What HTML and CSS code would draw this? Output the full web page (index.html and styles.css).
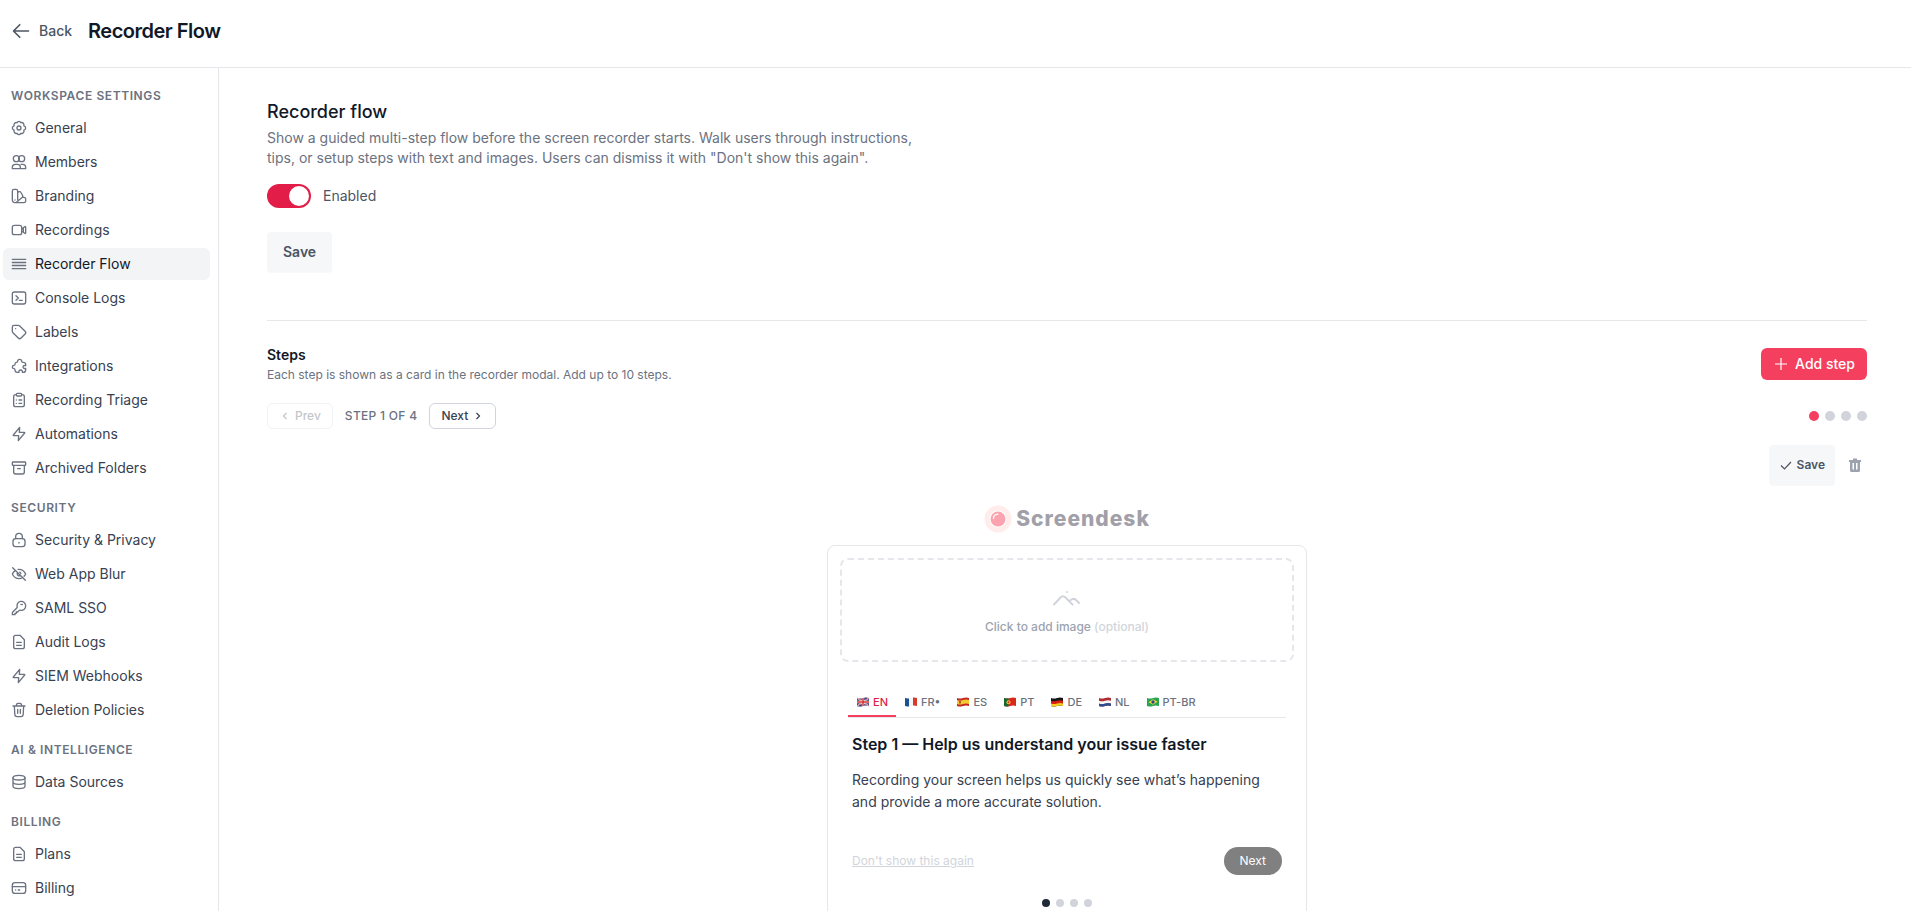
FILE: index.html
```
<!DOCTYPE html>
<html lang="en">

<head>
    <meta charset="UTF-8">
    <meta name="viewport" content="width=device-width, initial-scale=1.0">
    <title>Recorder Flow</title>
    <link rel="stylesheet" href="styles.css">
</head>

<body>

    <header class="topbar">
        <a href="#" class="back">
            <svg viewBox="0 0 24 24"><path d="M10.5 19.5 3 12l7.5-7.5M3 12h18"/></svg>
            Back
        </a>
        <h1>Recorder Flow</h1>
    </header>

    <div class="layout">
        <nav class="sidebar">
            <h2>Workspace Settings</h2>
            <ul>
                <li><a href="#"><svg viewBox="0 0 24 24"><circle cx="12" cy="12" r="3"/><path d="M12 2q2 0 2.500 2 2.500-.8 4 .8t.8 3.900q2.700.8 2.700 3.300t-2.700 3.300q.8 2.300-.8 3.900t-4 .8q-.5 2-2.500 2t-2.500-2q-2.500.8-4-.8t-.8-3.900Q2 14.500 2 12t2.700-3.300q-.8-2.300.8-3.900t4-.8Q10 2 12 2z"/></svg>General</a></li>
                <li><a href="#"><svg viewBox="0 0 24 24"><circle cx="8" cy="7" r="4.500"/><circle cx="16" cy="7" r="4.500"/><path d="M2 22v-2a4.500 4.500 0 0 1 4.500-4.500h3A4.500 4.500 0 0 1 14 20v2zM15 15.500h2.500A4.500 4.500 0 0 1 22 20v2h-8"/></svg>Members</a></li>
                <li><a href="#"><svg viewBox="0 0 24 24"><path d="M10 17.500V4.500A2.500 2.500 0 0 0 7.500 2h-3A2.500 2.500 0 0 0 2 4.500v13A4 4 0 0 0 6 22h13.500a2.500 2.500 0 0 0 2.500-2.500v-3a2.500 2.500 0 0 0-2.500-2.500H18M10 6.500l1.500-.8a2.500 2.500 0 0 1 3.400 1l2.400 4.200a2.500 2.500 0 0 1-.6 3.200L8.500 21M6 18h.01"/></svg>Branding</a></li>
                <li><a href="#"><svg viewBox="0 0 24 24"><rect x="2" y="5" width="14" height="14" rx="3"/><path d="M16 10.500 20.500 7c.8-.6 1.500-.2 1.500.8v8.400c0 1-.7 1.400-1.500.8L16 13.500M18.500 9v6"/></svg>Recordings</a></li>
                <li><a href="#" class="active"><svg viewBox="0 0 24 24"><path d="M2 5h20M2 9.700h20M2 14.300h20M2 19h20"/></svg>Recorder Flow</a></li>
                <li><a href="#"><svg viewBox="0 0 24 24"><rect x="2" y="3" width="20" height="18" rx="3"/><path d="M7.500 8.500 11 12l-3.500 3.500M12.500 15.500H17"/></svg>Console Logs</a></li>
                <li><a href="#"><svg viewBox="0 0 24 24"><path d="M2 11V4.500A2.500 2.500 0 0 1 4.500 2H11a3 3 0 0 1 2.100.9l8 8a3 3 0 0 1 0 4.200l-6 6a3 3 0 0 1-4.200 0l-8-8A3 3 0 0 1 2 11zM7 7h.01"/></svg>Labels</a></li>
                <li><a href="#"><svg viewBox="0 0 24 24"><path d="M10 5a3 3 0 0 1 6 0c0 1.500.3 1.500 2 1.500 2.500 0 4 .5 4 3v2c-2-.8-4 .3-4 2s2 2.800 4 2v2c0 2.500-1 4-3.500 4H17c.5-2-.5-3.500-2.500-3.500s-3 1.500-2.500 3.500H9.500C7 21.500 6 20.500 6 18c0-1.600 0-2-1.500-2a2.500 2.500 0 0 1 0-5C6 11 6 10.500 6 9.500 6 7.500 7 6.500 8 6.500c1.500 0 2 0 2-1.500z"/></svg>Integrations</a></li>
                <li><a href="#"><svg viewBox="0 0 24 24"><path d="M16 4h1a3 3 0 0 1 3 3v12a3 3 0 0 1-3 3H7a3 3 0 0 1-3-3V7a3 3 0 0 1 3-3h1M8 3.500C8 2.700 8.700 2 9.500 2h5c.8 0 1.500.7 1.500 1.500v1c0 .8-.7 1.500-1.500 1.500h-5C8.700 6 8 5.300 8 4.500zM8 12h.01M8 17h.01M12 12h4M12 17h4"/></svg>Recording Triage</a></li>
                <li><a href="#"><svg viewBox="0 0 24 24"><path d="M13 2 3.500 13.500c-.4.500-.2.900.5.900h7.500L11 22l9.500-11.500c.4-.5.200-.9-.5-.9h-7.500z"/></svg>Automations</a></li>
                <li><a href="#"><svg viewBox="0 0 24 24"><rect x="2" y="3" width="20" height="5" rx="1"/><path d="M4 8v10a3 3 0 0 0 3 3h10a3 3 0 0 0 3-3V8M10 13h4"/></svg>Archived Folders</a></li>
            </ul>

            <h2>Security</h2>
            <ul>
                <li><a href="#"><svg viewBox="0 0 24 24"><rect x="3" y="10" width="18" height="12" rx="4"/><path d="M7 10V7a5 5 0 0 1 10 0v3M12 15.500v1"/></svg>Security &amp; Privacy</a></li>
                <li><a href="#"><svg viewBox="0 0 24 24"><path d="M10.700 5.100C17 4.500 20.800 9.500 22 12c-.5 1-1.300 2.200-2.400 3.400M6.500 6.500C4.200 8 2.800 10.300 2 12c1.200 2.500 4.600 7 10 7 2.200 0 4-.7 5.500-1.700M9.900 9.900a3 3 0 0 0 4.200 4.200M13 9.200a3 3 0 0 1 1.900 2M2.500 2.500l19 19"/></svg>Web App Blur</a></li>
                <li><a href="#"><svg viewBox="0 0 24 24"><path d="M17 7a3 3 0 0 0-2-.5M22 8.500A6.500 6.500 0 1 0 9.300 10.500c.1.500 0 .8-.3 1.100L2.700 18c-.5.500-.7.900-.7 1.600V22h4v-2h2v-2h2l2.400-2.400c.3-.3.700-.4 1.100-.3A6.500 6.500 0 0 0 22 8.500z"/></svg>SAML SSO</a></li>
                <li><a href="#"><svg viewBox="0 0 24 24"><path d="M13.500 2H7a3 3 0 0 0-3 3v14a3 3 0 0 0 3 3h10a3 3 0 0 0 3-3V8.500zM8.500 12.500h7M8.500 17h7"/></svg>Audit Logs</a></li>
                <li><a href="#"><svg viewBox="0 0 24 24"><path d="M13 2 3.500 13.500c-.4.500-.2.900.5.900h7.500L11 22l9.500-11.500c.4-.5.200-.9-.5-.9h-7.500z"/></svg>SIEM Webhooks</a></li>
                <li><a href="#"><svg viewBox="0 0 24 24"><path d="M3 6h18M8 6c0-2.500.8-4 2.500-4h3C15.200 2 16 3.500 16 6M5 6l.7 12.500c.1 2.300 1 3.500 3.300 3.500h6c2.300 0 3.200-1.200 3.300-3.500L19 6M10 11v6M14 11v6"/></svg>Deletion Policies</a></li>
            </ul>

            <h2>AI &amp; Intelligence</h2>
            <ul>
                <li><a href="#"><svg viewBox="0 0 24 24"><ellipse cx="12" cy="5.500" rx="9" ry="3.500"/><path d="M3 5.500v13C3 20.400 7 22 12 22s9-1.600 9-3.500v-13M3 12c0 1.900 4 3.500 9 3.500s9-1.600 9-3.500"/></svg>Data Sources</a></li>
            </ul>

            <h2>Billing</h2>
            <ul>
                <li><a href="#"><svg viewBox="0 0 24 24"><path d="M13.500 2H7a3 3 0 0 0-3 3v14a3 3 0 0 0 3 3h10a3 3 0 0 0 3-3V8.500zM8.500 12.500h7M8.500 17h7"/></svg>Plans</a></li>
                <li><a href="#"><svg viewBox="0 0 24 24"><rect x="2" y="4" width="20" height="16" rx="4"/><path d="M2 10h20M7 15h.01M11 15h2"/></svg>Billing</a></li>
            </ul>
        </nav>

        <main class="content">
            <section class="settings">
                <h2>Recorder flow</h2>
                <p>Show a guided multi-step flow before the screen recorder starts. Walk users through instructions, tips, or setup steps with text and images. Users can dismiss it with "Don't show this again".</p>
                <label class="toggle">
                    <input type="checkbox" checked>
                    Enabled
                </label>
                <button type="button" class="btn-save">Save</button>
            </section>

            <section class="steps">
                <div class="row">
                    <div>
                        <h3>Steps</h3>
                        <p>Each step is shown as a card in the recorder modal. Add up to 10 steps.</p>
                    </div>
                    <button type="button" class="btn-add">
                        <svg viewBox="0 0 16 16"><path d="M8 2v12M2 8h12"/></svg>
                        Add step
                    </button>
                </div>

                <div class="row pager">
                    <div class="pager-controls">
                        <button type="button" disabled><svg viewBox="0 0 12 12"><path d="M7.500 3 4.500 6l3 3"/></svg>Prev</button>
                        <span>STEP 1 OF 4</span>
                        <button type="button">Next<svg viewBox="0 0 12 12"><path d="m4.500 3 3 3-3 3"/></svg></button>
                    </div>
                    <div class="dots">
                        <span class="current"></span><span></span><span></span><span></span>
                    </div>
                </div>

                <div class="step-actions">
                    <button type="button" class="btn-save small">
                        <svg viewBox="0 0 14 14"><path d="M2 7.500 5.500 11 12 4"/></svg>
                        Save
                    </button>
                    <button type="button" class="btn-trash" aria-label="Delete step">
                        <svg viewBox="0 0 16 16"><path fill-rule="evenodd" d="M6 1.500h4V3h4v2h-1v8.500a1.500 1.500 0 0 1-1.500 1.500h-7A1.500 1.500 0 0 1 3 13.500V5H2V3h4zM5.500 6v6.500H7V6zM9 6v6.500h1.500V6z"/></svg>
                    </button>
                </div>

                <div class="logo">
                    <svg viewBox="0 0 28 28"><circle cx="14" cy="14" r="11" fill="none" stroke="#ffeceb" stroke-width="5"/><circle cx="14" cy="14" r="7.500" fill="#fba4af"/><path d="M9.500 13.500c0-2.500 1.800-4.200 4.500-4.400" fill="none" stroke="#fff" stroke-width="1.200" stroke-linecap="round"/></svg>
                    Screendesk
                </div>

                <div class="card">
                    <button type="button" class="upload">
                        <svg viewBox="0 0 32 24"><path d="M3 19.500 9.500 12.500q2.500-2.500 5 0L21.500 19.500M18.500 16l2-1.500q2.500-1.500 4.500.5l3 3"/><circle cx="16" cy="7" r="1"/></svg>
                        <span>Click to add image <em>(optional)</em></span>
                    </button>

                    <div class="card-body">
                        <div class="tabs" role="tablist">
                            <button type="button" role="tab" class="selected"><svg viewBox="0 0 14 10"><path fill="#29337a" d="M1 1q3 1 6 0t6 0v8q-3-1-6 0t-6 0z"/><path stroke="#fff" stroke-width="1.500" d="m1 1 12 8M13 1 1 9"/><path stroke="#d03433" stroke-width=".7" d="m1 1 12 8M13 1 1 9"/><path stroke="#fff" stroke-width="2.500" d="M7 1v8M1 5h12"/><path stroke="#d03433" stroke-width="1.500" d="M7 1v8M1 5h12"/></svg>EN</button>
                            <button type="button" role="tab"><svg viewBox="0 0 14 10"><path fill="#f3f3f3" d="M1 1q3 1 6 0t6 0v8q-3-1-6 0t-6 0z"/><path fill="#1c5096" d="M1 1q2 .7 4 .4v8Q3 9.700 1 9z"/><path fill="#d8392b" d="M9 .6q2-.3 4 .4v8q-2-.7-4-.4z"/></svg>FR•</button>
                            <button type="button" role="tab"><svg viewBox="0 0 14 10"><path fill="#c3281e" d="M1 1q3 1 6 0t6 0v8q-3-1-6 0t-6 0z"/><path fill="#f6c731" d="M1 3q3 1 6 0t6 0v4q-3-1-6 0t-6 0z"/><path fill="#a9622c" d="M3 4h2v2.500H3z"/></svg>ES</button>
                            <button type="button" role="tab"><svg viewBox="0 0 14 10"><path fill="#d9271c" d="M1 1q3 1 6 0t6 0v8q-3-1-6 0t-6 0z"/><path fill="#16692f" d="M1 1q2 .7 4.500.3v8Q3 9.700 1 9z"/><circle cx="5.500" cy="5.200" r="2" fill="#f0c93a"/><circle cx="5.500" cy="5.200" r="1" fill="#d9271c"/></svg>PT</button>
                            <button type="button" role="tab"><svg viewBox="0 0 14 10"><path fill="#151515" d="M1 1q3 1 6 0t6 0v8q-3-1-6 0t-6 0z"/><path fill="#dc1f13" d="M1 3.700q3 1 6 0t6 0v3q-3-1-6 0t-6 0z"/><path fill="#f8cd24" d="M1 6.400q3 1 6 0t6 0V9q-3-1-6 0t-6 0z"/></svg>DE</button>
                            <button type="button" role="tab"><svg viewBox="0 0 14 10"><path fill="#b02a31" d="M1 1q3 1 6 0t6 0v8q-3-1-6 0t-6 0z"/><path fill="#f5f5f5" d="M1 3.700q3 1 6 0t6 0v3q-3-1-6 0t-6 0z"/><path fill="#2d4d91" d="M1 6.400q3 1 6 0t6 0V9q-3-1-6 0t-6 0z"/></svg>NL</button>
                            <button type="button" role="tab"><svg viewBox="0 0 14 10"><path fill="#26a353" d="M1 1q3 1 6 0t6 0v8q-3-1-6 0t-6 0z"/><path fill="#f4d92f" d="m2.500 5.300 4.500-3 4.500 2.500-4.500 3z"/><circle cx="7" cy="5" r="1.700" fill="#28489a"/></svg>PT-BR</button>
                        </div>

                        <div class="card-text">
                            <h4>Step 1 — Help us understand your issue faster</h4>
                            <p>Recording your screen helps us quickly see what’s happening and provide a more accurate solution.</p>
                            <div class="row card-footer">
                                <a href="#">Don't show this again</a>
                                <button type="button">Next</button>
                            </div>
                        </div>

                        <div class="dots card-dots">
                            <span class="current"></span><span></span><span></span><span></span>
                        </div>
                    </div>
                </div>
            </section>
        </main>
    </div>

</body>

</html>
```
FILE: styles.css
```
* {
    box-sizing: border-box;
}

body {
    margin: 0;
    height: 100vh;
    display: flex;
    flex-direction: column;
    overflow: hidden;
    font-family: Inter, sans-serif;
    font-size: 14px;
    line-height: 20px;
    color: #374151;
    background-color: #fff;
}

h1, h2, h3, h4, p, ul {
    margin: 0;
    padding: 0;
}

a {
    color: inherit;
    text-decoration: none;
}

button {
    font: inherit;
    color: inherit;
    background: none;
    border: none;
    padding: 0;
    cursor: pointer;
}

svg {
    display: block;
    flex-shrink: 0;
}

.topbar {
    display: flex;
    align-items: center;
    gap: 16px;
    padding: 16px 11px 21px;
    border-bottom: 1px solid #e5e7eb;
}

.topbar h1 {
    font-size: 20px;
    line-height: 30px;
    font-weight: 600;
    color: #111827;
    letter-spacing: -0.025em;
}

.back {
    display: flex;
    align-items: center;
    gap: 8px;
    font-weight: 500;
    color: #4b5563;
}

.back svg {
    width: 20px;
    height: 20px;
    fill: none;
    stroke: #4b5563;
    stroke-width: 2;
    stroke-linecap: round;
    stroke-linejoin: round;
}

.layout {
    display: flex;
    flex: 1;
    min-height: 0;
}

/* sidebar */
.sidebar {
    width: 219px;
    flex-shrink: 0;
    padding: 20px 8px 20px 3px;
    border-right: 1px solid #e5e7eb;
    overflow: hidden;
}

.sidebar h2 {
    padding-left: 8px;
    margin-bottom: 8px;
    font-size: 12px;
    line-height: 16px;
    font-weight: 600;
    letter-spacing: 0.05em;
    text-transform: uppercase;
    color: #6b7280;
}

.sidebar ul {
    list-style-type: none;
    display: flex;
    flex-direction: column;
    gap: 2px;
    margin-bottom: 16px;
}

.sidebar a {
    display: flex;
    align-items: center;
    gap: 8px;
    height: 32px;
    padding: 0 8px;
    border-radius: 6px;
}

.sidebar a.active {
    color: #111827;
    background-color: #f3f4f6;
}

.sidebar svg {
    width: 16px;
    height: 16px;
    fill: none;
    stroke: #6b7280;
    stroke-width: 2;
    stroke-linecap: round;
    stroke-linejoin: round;
}

/* main column */
.content {
    flex: 1;
    min-width: 0;
    padding: 32px 44px 0 48px;
    overflow: hidden;
}

.row {
    display: flex;
    align-items: center;
    justify-content: space-between;
}

.settings {
    display: flex;
    flex-direction: column;
    align-items: flex-start;
    padding-bottom: 48px;
    border-bottom: 1px solid #e5e7eb;
}

.settings h2 {
    margin-bottom: 4px;
    font-size: 18px;
    line-height: 24px;
    font-weight: 500;
    color: #111827;
}

.settings p {
    max-width: 672px;
    color: #6b7280;
}

.toggle {
    display: flex;
    align-items: center;
    gap: 12px;
    margin: 16px 0 24px;
    color: #4b5563;
}

.toggle input {
    appearance: none;
    width: 44px;
    height: 24px;
    margin: 0;
    padding: 2px;
    border-radius: 12px;
    background-color: #d1d5db;
}

.toggle input::before {
    content: "";
    display: block;
    width: 20px;
    height: 20px;
    border-radius: 50%;
    background-color: #fff;
}

.toggle input:checked {
    background-color: #e11d48;
}

.toggle input:checked::before {
    margin-left: auto;
}

.btn-save {
    display: flex;
    align-items: center;
    gap: 4px;
    height: 40px;
    padding: 0 16px;
    border-radius: 4px;
    font-weight: 600;
    color: #4b5563;
    background-color: #f6f7f9;
    box-shadow: 0 1px 1px rgba(0, 0, 0, 0.03);
}

.btn-save.small {
    padding: 0 10px;
    font-size: 12px;
}

.btn-save svg {
    width: 14px;
    height: 14px;
    fill: none;
    stroke: #4b5563;
    stroke-width: 1.2;
}

.steps {
    padding-top: 24px;
}

.steps h3 {
    margin-bottom: 2px;
    font-size: 14px;
    line-height: 20px;
    font-weight: 600;
    color: #111827;
}

.steps .row > div > p {
    font-size: 12px;
    line-height: 16px;
    color: #6b7280;
}

.btn-add {
    display: flex;
    align-items: center;
    gap: 6px;
    height: 32px;
    padding: 0 12px;
    border-radius: 6px;
    font-weight: 500;
    color: #fff;
    background-color: #f43f5e;
}

.btn-add svg {
    width: 16px;
    height: 16px;
    stroke: #fff;
    stroke-width: 1.2;
}

.pager {
    margin-top: 20px;
}

.pager-controls {
    display: flex;
    align-items: center;
    gap: 12px;
    font-size: 12px;
    line-height: 16px;
    font-weight: 500;
    color: #6b7280;
}

.pager-controls span {
    letter-spacing: 0.025em;
}

.pager-controls button {
    display: flex;
    align-items: center;
    gap: 4px;
    height: 26px;
    padding: 0 11px;
    border: 1px solid #d1d5db;
    border-radius: 6px;
    color: #374151;
}

.pager-controls button:disabled {
    opacity: 0.3;
}

.pager-controls svg {
    width: 12px;
    height: 12px;
    fill: none;
    stroke: #374151;
    stroke-width: 1.2;
}

.dots {
    display: flex;
    gap: 6px;
}

.dots span {
    width: 10px;
    height: 10px;
    border-radius: 50%;
    background-color: #d1d5db;
}

.dots .current {
    background-color: #f43f5e;
}

.step-actions {
    display: flex;
    align-items: center;
    justify-content: flex-end;
    gap: 8px;
    margin: 16px 0 20px;
}

.btn-trash {
    padding: 4px;
}

.btn-trash svg {
    width: 16px;
    height: 16px;
    fill: #9ca3af;
}

/* step preview */
.logo {
    display: flex;
    align-items: center;
    justify-content: center;
    gap: 4px;
    height: 28px;
    margin-bottom: 12px;
    font-size: 21px;
    font-weight: 800;
    letter-spacing: 1px;
    color: #a1a0a9;
}

.logo svg {
    width: 28px;
    height: 28px;
}

.card {
    max-width: 480px;
    margin: 0 auto;
    padding: 12px 12px 24px;
    border: 1px solid #e5e7eb;
    border-radius: 8px;
}

.upload {
    display: flex;
    flex-direction: column;
    align-items: center;
    justify-content: center;
    gap: 10px;
    width: 100%;
    height: 104px;
    border: 2px dashed #e5e7eb;
    border-radius: 8px;
    font-size: 12px;
    line-height: 16px;
    font-weight: 500;
    color: #9ca3af;
}

.upload svg {
    width: 32px;
    height: 24px;
    fill: none;
    stroke: #d1d5db;
    stroke-width: 2;
    stroke-linecap: round;
}

.upload circle {
    fill: #d1d5db;
    stroke: none;
}

.upload em {
    font-style: normal;
    color: #d1d5db;
}

.card-body {
    padding: 24px 8px 0;
}

.tabs {
    display: flex;
    border-bottom: 1px solid #e5e7eb;
}

.tabs button {
    display: flex;
    align-items: center;
    gap: 3px;
    padding: 8px 8px 5px;
    border-bottom: 2px solid transparent;
    font-size: 11px;
    line-height: 16px;
    font-weight: 500;
    color: #6b7280;
}

.tabs .selected {
    color: #e11d48;
    border-color: #f43f5e;
}

.tabs svg {
    width: 14px;
    height: 10px;
}

.card-text {
    padding: 14px 4px 0;
}

.card-text h4 {
    font-size: 16px;
    line-height: 24px;
    font-weight: 600;
    color: #111827;
}

.card-text p {
    margin-top: 13px;
    line-height: 22px;
}

.card-footer {
    margin-top: 34px;
    font-size: 12px;
    line-height: 16px;
}

.card-footer a {
    color: #d1d5db;
    text-decoration: underline;
}

.card-footer button {
    height: 28px;
    padding: 0 16px;
    border-radius: 14px;
    color: #fff;
    background-color: #808080;
}

.card-dots {
    justify-content: center;
    margin-top: 24px;
}

.card-dots span {
    width: 8px;
    height: 8px;
}

.card-dots .current {
    background-color: #1f2937;
}
```
